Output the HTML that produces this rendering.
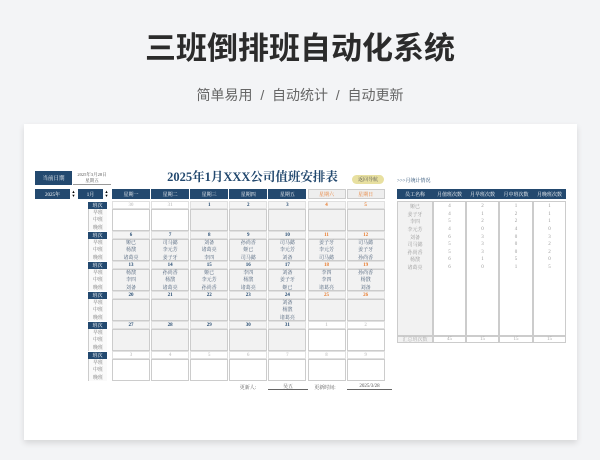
<!DOCTYPE html>
<html><head><meta charset="utf-8"><style>
*{margin:0;padding:0;box-sizing:border-box}
body{width:600px;height:460px;background:#f3f4f6;position:relative;overflow:hidden;font-family:"Liberation Serif","Noto Serif CJK SC",serif;}
.a{position:absolute}
.t{font-family:"Liberation Sans","Noto Sans CJK SC",sans-serif;}
.c{display:flex;align-items:center;justify-content:center;white-space:nowrap}
.card{left:24px;top:124px;width:553px;height:316px;background:#fff;box-shadow:0 3px 6px rgba(0,0,0,.12)}
.blue{background:#23496f;color:#fff}
.s{font-size:5px}
</style></head><body>
<div class="a t c" style="left:0;top:28px;width:600px;height:34px;font-size:31px;font-weight:bold;color:#2b2b2b;letter-spacing:0px">三班倒排班自动化系统</div>
<div class="a t c" style="left:0;top:86px;width:600px;height:18px;font-size:14px;color:#666">简单易用&nbsp;&nbsp;/&nbsp;&nbsp;自动统计&nbsp;&nbsp;/&nbsp;&nbsp;自动更新</div>
<div class="a card"></div>
<div class="a blue c s" style="left:35px;top:171px;width:37px;height:14px;font-size:5.5px">当前日期</div>
<div class="a c s" style="left:73px;top:171px;width:38px;height:14px;flex-direction:column;color:#555;border-bottom:1px solid #999;font-size:4.5px;line-height:6px"><div>2025年3月28日</div><div>星期五</div></div>
<div class="a blue c s" style="left:35px;top:189px;width:35px;height:10px">2025年</div>
<div class="a c" style="left:71px;top:189px;width:5px;height:10px;font-size:4px;flex-direction:column;line-height:4px">▲<br>▼</div>
<div class="a blue c s" style="left:78px;top:189px;width:25px;height:10px">1月</div>
<div class="a c" style="left:104px;top:189px;width:5px;height:10px;font-size:4px;flex-direction:column;line-height:4px">▲<br>▼</div>
<div class="a c" style="left:160px;top:168px;width:185px;height:16px;font-size:12.5px;font-weight:bold;color:#23496f">2025年1月XXX公司值班安排表</div>
<div class="a c s" style="left:352px;top:175px;width:32px;height:9px;background:#e8e0a0;border-radius:5px;color:#555">返回导航</div>
<div class="a s" style="left:397px;top:177px;color:#23496f">&gt;&gt;&gt;月统计情况</div>
<div id="g"></div>
<script>
var h='';
function box(x,y,w,hh,txt,st){h+='<div class="a c s" style="left:'+x+'px;top:'+y+'px;width:'+w+'px;height:'+hh+'px;'+(st||'')+'">'+txt+'</div>';}
var days=['星期一','星期二','星期三','星期四','星期五','星期六','星期日'];
for(var i=0;i<7;i++){var x=112+i*39.1;
 if(i<5)box(x,189,38,10,days[i],'background:#23496f;color:#fff');
 else box(x,189,38,10,days[i],'background:#eee;color:#e87b2d;border:1px solid #ccc');}
var wk=[[30,31,1,2,3,4,5],[6,7,8,9,10,11,12],[13,14,15,16,17,18,19],[20,21,22,23,24,25,26],[27,28,29,30,31,1,2],[3,4,5,6,7,8,9]];
var P={'1,0':['姬已','杨戬','诸葛亮'],'1,1':['司马懿','李元芳','姜子牙'],'1,2':['刘备','诸葛亮','李四'],'1,3':['孙尚香','姬已','司马懿'],'1,4':['司马懿','李元芳','刘备'],'1,5':['姜子牙','李元芳','司马懿'],'1,6':['司马懿','姜子牙','孙尚香'],
'2,0':['杨戬','李四','刘备'],'2,1':['孙尚香','杨戬','诸葛亮'],'2,2':['姬已','李元芳','孙尚香'],'2,3':['李四','杨戬','诸葛亮'],'2,4':['刘备','姜子牙','姬已'],'2,5':['李四','李四','诸葛亮'],'2,6':['孙尚香','杨戬','刘备'],'3,4':['刘备','杨戬','诸葛亮']};
for(var w=0;w<6;w++){var y=201+w*30;
 box(88,y+1,19,6.5,'班次','background:#23496f;color:#fff');
 ['早班','中班','晚班'].forEach(function(s,k){box(88,y+8+k*7.3,19,7.3,s,'color:#777;background:#fafafa;border-left:1px solid #ccc');});
 for(var i=0;i<7;i++){var x=112+i*39.1,d=wk[w][i];
  var inm=!((w==0&&i<2)||(w==4&&i>4)||w==5);
  var col=!inm?'#ccc':(i>4?'#e87b2d':'#23496f');
  box(x,y,38,8,d,'color:'+col+';font-weight:bold;background:'+(inm?'#f4f4f4':'#fff')+';border:1px solid #e0e0e0');
  var p=P[w+','+i]||['','',''];
  h+='<div class="a" style="left:'+x+'px;top:'+(y+8)+'px;width:38px;height:22px;background:'+(inm?'#f2f2f2':'#fff')+';border:1px solid #ccc"></div>';
  p.forEach(function(n,k){box(x,y+8+k*7.3,38,7.3,n,'color:#4a5f78');});
 }}
var sx=[397,433,466,499,533,566],hd=['员工名称','月值班次数','月早班次数','月中班次数','月晚班次数'];
for(var i=0;i<5;i++)box(sx[i],189,sx[i+1]-sx[i],10,hd[i],'background:#23496f;color:#fff');
for(var i=0;i<5;i++)h+='<div class="a" style="left:'+sx[i]+'px;top:201px;width:'+(sx[i+1]-sx[i])+'px;height:135px;border:1px solid #ccc;background:'+(i==0?'#f2f2f2':'#fff')+'"></div>';
var R=[['姬已',4,2,1,1],['姜子牙',4,1,2,1],['李四',5,2,2,1],['李元芳',4,0,4,0],['刘备',6,3,0,3],['司马懿',5,3,0,2],['孙尚香',5,3,0,2],['杨戬',6,1,5,0],['诸葛亮',6,0,1,5]];
R.forEach(function(r,j){for(var i=0;i<5;i++)box(sx[i],203+j*7.6,sx[i+1]-sx[i],7.6,r[i],'color:#999');});
var T=['汇总班次数',45,15,15,15];
for(var i=0;i<5;i++)box(sx[i],336,sx[i+1]-sx[i],7,T[i],'color:#aaa;border:1px solid #ccc;background:'+(i==0?'#f2f2f2':'#fff'));
box(236,384,24,6,'更新人:','color:#555');
box(268,384,40,6,'吴五','color:#555;border-bottom:1px solid #666');
box(312,384,26,6,'更新时间:','color:#555');
box(347,384,45,6,'2025/3/28','color:#555;border-bottom:1px solid #666');
document.getElementById('g').innerHTML=h;
</script>
</body></html>
